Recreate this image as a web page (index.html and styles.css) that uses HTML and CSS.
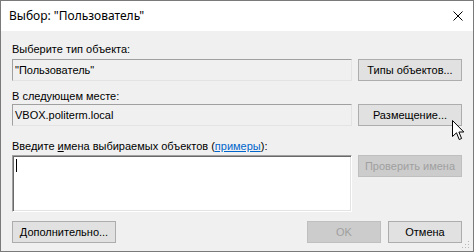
FILE: index.html
```html
<!DOCTYPE html>
<html lang="ru">
<head>
    <meta charset="UTF-8">
    <title>Выбор: "Пользователь"</title>
    <link rel="stylesheet" href="styles.css">
</head>
<body>
    <div class="window">
        <!-- Title bar -->
        <div class="titlebar">
            <span class="title">Выбор: "Пользователь"</span>
            <svg class="close" width="10" height="10" viewBox="0 0 10 10">
                <path d="M0.5 0.5 L9.5 9.5 M9.5 0.5 L0.5 9.5" stroke="#000" stroke-width="1" fill="none"/>
            </svg>
        </div>

        <div class="dialog">
            <div class="label first">Выберите тип объекта:</div>
            <div class="row">
                <div class="field readonly">"Пользователь"</div>
                <button class="btn">Типы объектов...</button>
            </div>

            <div class="label second">В следующем месте:</div>
            <div class="row">
                <div class="field readonly">VBOX.politerm.local</div>
                <button class="btn">Размещение...</button>
            </div>

            <div class="label third">Введите <u>и</u>мена выбираемых объектов (<a class="link" href="#">примеры</a>):</div>
            <div class="row tall">
                <div class="field input"><span class="caret"></span></div>
                <button class="btn" disabled>Проверить имена</button>
            </div>

            <div class="footer">
                <button class="btn">Дополнительно...</button>
                <div class="actions">
                    <button class="btn small" disabled>OK</button>
                    <button class="btn small">Отмена</button>
                </div>
            </div>
        </div>

        <svg class="grip" width="8" height="8" viewBox="0 0 8 8">
            <rect x="6" y="0" width="1" height="1" fill="#b8b8b8"/>
            <rect x="3" y="3" width="1" height="1" fill="#b8b8b8"/>
            <rect x="6" y="3" width="1" height="1" fill="#b8b8b8"/>
            <rect x="0" y="6" width="1" height="1" fill="#b8b8b8"/>
            <rect x="3" y="6" width="1" height="1" fill="#b8b8b8"/>
            <rect x="6" y="6" width="1" height="1" fill="#b8b8b8"/>
        </svg>

        <!-- mouse pointer over the button -->
        <svg class="pointer" width="13" height="21" viewBox="0 0 13 21">
            <path d="M0.5 0.5 L0.5 16.5 L4.5 12.8 L7.2 19.5 L9.6 18.5 L6.9 12 L11.8 12 Z" fill="#fff" stroke="#000" stroke-width="1" stroke-linejoin="miter"/>
        </svg>
    </div>
</body>
</html>
```

FILE: styles.css
```css
body {
    margin: 0;
    font-family: "Liberation Sans", Arial, sans-serif;
    font-size: 11px;
    color: #000;
}
.window {
    position: relative;
    width: 474px;
    height: 252px;
    box-sizing: border-box;
    border: 1px solid #7a7a7a;
    background-color: #f0f0f0;
}
.titlebar {
    height: 30px;
    background-color: #fff;
    display: flex;
    align-items: center;
    justify-content: space-between;
    padding-left: 8px;
    padding-right: 10px;
}
.title {
    font-family: "Noto Sans", "Open Sans", sans-serif;
    font-size: 12px;
    line-height: 16px;
}
.close {
    display: block;
}
.dialog {
    padding: 12px 11px 0 11px;
}
.label {
    line-height: 13px;
    height: 13px;
    white-space: nowrap;
}
.label.first {
    margin-bottom: 3px;
}
.label.second {
    margin-top: 9px;
    margin-bottom: 1px;
}
.label.third {
    margin-top: 14px;
    margin-bottom: 2px;
}
.link {
    color: #0066cc;
}
.row {
    display: grid;
    grid-template-columns: 340px 104px;
    column-gap: 6px;
    align-items: start;
}
.field {
    height: 22px;
    box-sizing: border-box;
    border: 1px solid;
    border-color: #a0a0a0 #e3e3e3 #e3e3e3 #a0a0a0;
    padding: 0 2px;
    line-height: 20px;
    white-space: nowrap;
    overflow: hidden;
}
.readonly {
    background-color: #f0f0f0;
}
.input {
    height: 57px;
    background-color: #fff;
    border-color: #a0a0a0 #fff #fff #a0a0a0;
    box-shadow: inset 1px 1px 0 #696969, inset -1px -1px 0 #e3e3e3;
    padding: 3px 2px;
    line-height: normal;
}
.caret {
    display: block;
    width: 1px;
    height: 13px;
    margin-left: 1px;
    background-color: #000;
}
.btn {
    height: 22px;
    box-sizing: border-box;
    border: 1px solid #adadad;
    background-color: #e1e1e1;
    font-family: "Liberation Sans", Arial, sans-serif;
    font-size: 11px;
    color: #000;
    padding: 0;
    text-align: center;
}
.btn:disabled {
    background-color: #cccccc;
    border-color: #bfbfbf;
    color: #a0a0a0;
}
.footer {
    margin-top: 9px;
    display: flex;
    justify-content: space-between;
}
.footer > .btn {
    width: 104px;
}
.actions {
    display: flex;
    gap: 7px;
}
.btn.small {
    width: 74px;
}
.grip {
    position: absolute;
    right: 3px;
    bottom: 2px;
}
.pointer {
    position: absolute;
    left: 451px;
    top: 119px;
}
```
